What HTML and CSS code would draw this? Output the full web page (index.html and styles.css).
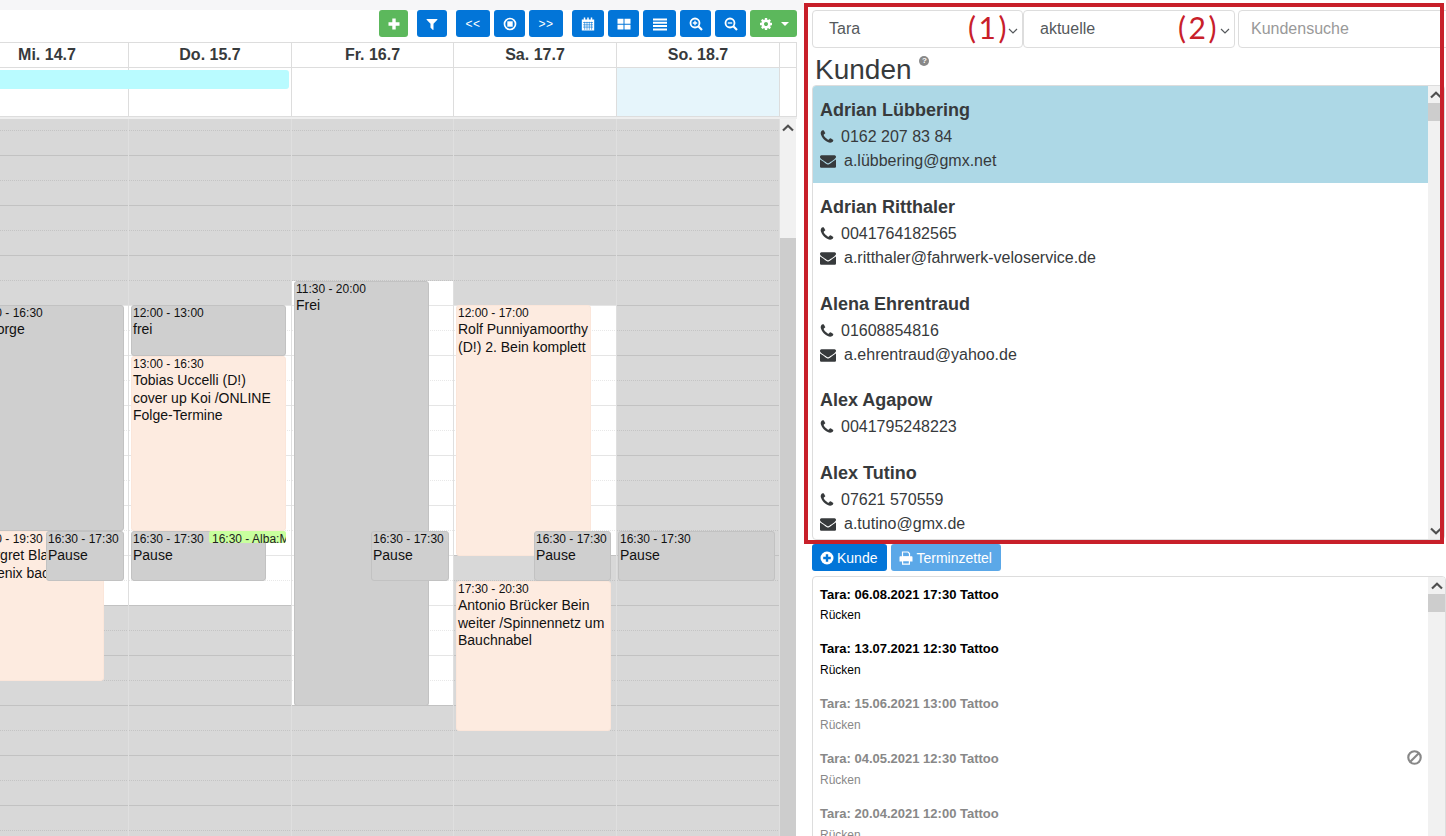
FILE: index.html
```html
<!DOCTYPE html>
<html lang="de">
<head>
<meta charset="utf-8">
<title>Kalender und Kunden</title>
<link rel="stylesheet" href="styles.css">
</head>
<body>
<svg class="defs" width="0" height="0" aria-hidden="true">
  <symbol id="i-phone" viewBox="0 0 1792 1792"><path d="M1600 1240q0 27-10 70.500t-21 68.500q-21 50-122 106-94 51-186 51-27 0-53-3.500t-57.500-12.500-47-14.500-55.500-20.500-49-18q-98-35-175-83-127-79-264-216t-216-264q-48-77-83-175-3-9-18-49t-20.500-55.500-14.500-47-12.500-57.500-3.500-53q0-92 51-186 56-101 106-122 25-11 68.500-21t70.500-10q14 0 21 3 18 6 53 76 11 19 30 54t35 63.500 31 53.500q3 4 17.500 25t21.500 35.500 7 28.500q0 20-28.500 50t-62 55-62 53-28.500 46q0 9 5 22.500t8.500 20.500 14 24 11.500 19q76 137 174 235t235 174q2 1 19 11.500t24 14 20.500 8.500 22.500 5q18 0 46-28.500t53-62 55-62 50-28.500q14 0 28.500 7t35.500 21.500 25 17.500q25 15 53.500 31t63.500 35 54 30q70 35 76 53 3 7 3 21z"/></symbol>
  <symbol id="i-mail" viewBox="0 0 1792 1792"><path d="M1792 710v794q0 66-47 113t-113 47h-1472q-66 0-113-47t-47-113v-794q44 49 101 87 362 246 497 345 57 42 92.500 65.500t94.500 48 110 24.500h2q51 0 110-24.500t94.500-48 92.500-65.500q170-123 498-345 57-39 100-87zm0-294q0 79-49 151t-122 123q-376 261-468 325-10 7-42.500 30.500t-54 38-52 32.500-57.500 27-50 9h-2q-23 0-50-9t-57.500-27-52-32.500-54-38-42.500-30.500q-91-64-262-182.500t-205-142.500q-62-42-117-115.500t-55-136.500q0-78 41.500-130t118.500-52h1472q65 0 112.500 47t47.500 113z"/></symbol>
  <symbol id="i-up" viewBox="0 0 12 8"><path d="M1 6.500 6 1.800l5 4.700" fill="none" stroke="#505050" stroke-width="2.200"/></symbol>
  <symbol id="i-down" viewBox="0 0 12 8"><path d="M1 1.500 6 6.200l5-4.700" fill="none" stroke="#505050" stroke-width="2.200"/></symbol>
  <symbol id="i-chev" viewBox="0 0 10 6"><path d="M1 1 5 5l4-4" fill="none" stroke="#55595c" stroke-width="1.200"/></symbol>
</svg>

<main class="cal">
  <div class="topstrip"></div>
  <div class="toolbar">
    <div class="tgroup">
      <button class="btn green w29"><svg class="ic" viewBox="0 0 14 14"><path d="M5.300 1.500h3.400v3.800h3.800v3.400H8.700v3.800H5.300V8.700H1.500V5.300h3.800z" fill="#fff"/></svg></button>
    </div>
    <div class="tgroup">
      <button class="btn w30"><svg class="ic" viewBox="0 0 1792 1792"><path fill="#fff" d="M1595 295q17 41-14 70l-493 493v742q0 42-39 59-13 5-25 5-27 0-45-19l-256-256q-19-19-19-45v-486l-493-493q-31-29-14-70 17-39 59-39h1280q42 0 59 39z"/></svg></button>
    </div>
    <div class="tgroup">
      <button class="btn w34 txt">&lt;&lt;</button>
      <button class="btn w31"><svg class="ic" viewBox="0 0 14 14"><circle cx="7" cy="7" r="5.500" fill="none" stroke="#fff" stroke-width="1.700"/><rect x="4.300" y="4.300" width="5.400" height="5.400" fill="#fff"/></svg></button>
      <button class="btn w34 txt">&gt;&gt;</button>
    </div>
    <div class="tgroup">
      <button class="btn w32"><svg class="ic" viewBox="0 0 14 14"><path d="M.8 2.500h12.400v11H.8z" fill="#fff"/><path d="M2 5.500h10M2 7.800h10M2 10.100h10M3.700 4.800v8M6 4.800v8M8.300 4.800v8M10.600 4.800v8" stroke="#0275d8" stroke-width=".6"/><path d="M3.500.6v3M7 .6v3M10.500.6v3" stroke="#fff" stroke-width="1.500"/></svg></button>
      <button class="btn w31"><svg class="ic" viewBox="0 0 14 14"><path d="M.5 1.800h6v4.900h-6zM7.500 1.800h6v4.900h-6zM.5 7.700h6v4.900h-6zM7.500 7.700h6v4.900h-6z" fill="#fff"/></svg></button>
      <button class="btn w33"><svg class="ic" viewBox="0 0 14 14"><path d="M0 1.500h14v2H0zM0 4.800h14v2H0zM0 8.100h14v2H0zM0 11.400h14v2H0z" fill="#fff"/></svg></button>
      <button class="btn w31"><svg class="ic" viewBox="0 0 14 14"><circle cx="6" cy="6" r="4.500" fill="none" stroke="#fff" stroke-width="1.800"/><path d="M9.300 9.300 13 13" stroke="#fff" stroke-width="2.200"/><path d="M6 3.800v4.400M3.800 6h4.400" stroke="#fff" stroke-width="1.300"/></svg></button>
      <button class="btn w31"><svg class="ic" viewBox="0 0 14 14"><circle cx="6" cy="6" r="4.500" fill="none" stroke="#fff" stroke-width="1.800"/><path d="M9.300 9.300 13 13" stroke="#fff" stroke-width="2.200"/><path d="M3.800 6h4.400" stroke="#fff" stroke-width="1.300"/></svg></button>
      <button class="btn green w47"><svg class="ic" viewBox="0 0 1792 1792"><path fill="#fff" d="M1152 896q0-106-75-181t-181-75-181 75-75 181 75 181 181 75 181-75 75-181zm512-109v222q0 12-8 23t-20 13l-185 28q-19 54-39 91 35 50 107 138 10 12 10 25t-9 23q-27 37-99 108t-94 71q-12 0-26-9l-138-108q-44 23-91 38-16 136-29 186-7 28-36 28h-222q-14 0-24.500-8.500t-11.500-21.500l-28-184q-49-16-90-37l-141 107q-10 9-25 9-14 0-25-11-126-114-165-168-7-10-7-23 0-12 8-23 15-21 51-66.500t54-70.500q-27-50-41-99l-183-27q-13-2-21-12.500t-8-23.500v-222q0-12 8-23t19-13l186-28q14-46 39-92-40-57-107-138-10-12-10-24 0-10 9-23 26-36 98.500-107.500t94.500-71.500q13 0 26 10l138 107q44-23 91-38 16-136 29-186 7-28 36-28h222q14 0 24.500 8.500t11.500 21.500l28 184q49 16 90 37l142-107q9-9 24-9 13 0 25 10 129 119 165 170 7 8 7 22 0 12-8 23-15 21-51 66.500t-54 70.500q26 50 41 98l183 28q13 2 21 12.500t8 23.500z"/></svg><span class="caret"></span></button>
    </div>
  </div>

  <div class="dayhead">
    <div class="hcell first">Mi. 14.7</div>
    <div class="hcell">Do. 15.7</div>
    <div class="hcell">Fr. 16.7</div>
    <div class="hcell">Sa. 17.7</div>
    <div class="hcell">So. 18.7</div>
    <div class="hcell"></div>
  </div>

  <div class="allday">
    <div class="acell"></div>
    <div class="acell"></div>
    <div class="acell"></div>
    <div class="acell"></div>
    <div class="acell sunday"></div>
    <div class="acell"></div>
    <div class="allbar"></div>
  </div>
  <div class="band"></div>

  <div class="calbody">
    <div class="day d-mi">
      <div class="ev gray" style="left:-30px;top:186px;width:154px;height:226px"><div class="t">12:00 - 16:30</div><div class="n in-6">George</div></div>
      <div class="ev peach" style="left:-30px;top:412px;width:134px;height:150px"><div class="t">16:30 - 19:30</div><div class="n in-4">Margret Blaser<br>Phoenix back</div></div>
      <div class="ev gray" style="left:46px;top:412px;width:78px;height:50px"><div class="t">16:30 - 17:30</div><div class="n">Pause</div></div>
    </div>
    <div class="day d-do">
      <div class="ev gray" style="left:2px;top:186px;width:155px;height:51px"><div class="t">12:00 - 13:00</div><div class="n">frei</div></div>
      <div class="ev peach" style="left:2px;top:237px;width:155px;height:175px"><div class="t">13:00 - 16:30</div><div class="n">Tobias Uccelli (D!)<br>cover up Koi /ONLINE<br>Folge-Termine</div></div>
      <div class="ev gray" style="left:2px;top:412px;width:135px;height:50px"><div class="t">16:30 - 17:30</div><div class="n">Pause</div></div>
      <div class="ev lime" style="left:80px;top:412px;width:77px;height:12px"><div class="t">16:30 - Alba:M</div></div>
    </div>
    <div class="day d-fr">
      <div class="ev gray" style="left:2px;top:162px;width:135px;height:425px"><div class="t">11:30 - 20:00</div><div class="n">Frei</div></div>
      <div class="ev gray" style="left:79px;top:412px;width:78px;height:50px"><div class="t">16:30 - 17:30</div><div class="n">Pause</div></div>
    </div>
    <div class="day d-sa">
      <div class="ev peach" style="left:2px;top:186px;width:135px;height:251px"><div class="t">12:00 - 17:00</div><div class="n">Rolf Punniyamoorthy (D!) 2. Bein komplett</div></div>
      <div class="ev gray" style="left:80px;top:412px;width:77px;height:50px"><div class="t">16:30 - 17:30</div><div class="n">Pause</div></div>
      <div class="ev peach" style="left:2px;top:462px;width:155px;height:150px"><div class="t">17:30 - 20:30</div><div class="n">Antonio Brücker Bein weiter /Spinnennetz um Bauchnabel</div></div>
    </div>
    <div class="day d-so">
      <div class="ev gray" style="left:1px;top:412px;width:157px;height:50px"><div class="t">16:30 - 17:30</div><div class="n">Pause</div></div>
    </div>
    <div class="sb cal-sb">
      <svg class="sb-up" width="12" height="8"><use href="#i-up"/></svg>
      <div class="sb-thumb"></div>
    </div>
  </div>
</main>

<aside class="side">
  <div class="filters">
    <div class="select first">Tara<svg class="chev" width="10" height="6"><use href="#i-chev"/></svg></div>
    <div class="select second">aktuelle<svg class="chev" width="10" height="6"><use href="#i-chev"/></svg></div>
    <div class="search">Kundensuche</div>
  </div>
  <h1 class="title">Kunden <span class="help">?</span></h1>

  <div class="panel customers">
    <div class="plist">
      <div class="cust active">
        <div class="cname">Adrian Lübbering</div>
        <div class="cline"><svg class="c-ph"><use href="#i-phone"/></svg>0162 207 83 84</div>
        <div class="cline"><svg class="c-ml"><use href="#i-mail"/></svg>a.lübbering@gmx.net</div>
      </div>
      <div class="cust">
        <div class="cname">Adrian Ritthaler</div>
        <div class="cline"><svg class="c-ph"><use href="#i-phone"/></svg>0041764182565</div>
        <div class="cline"><svg class="c-ml"><use href="#i-mail"/></svg>a.ritthaler@fahrwerk-veloservice.de</div>
      </div>
      <div class="cust">
        <div class="cname">Alena Ehrentraud</div>
        <div class="cline"><svg class="c-ph"><use href="#i-phone"/></svg>01608854816</div>
        <div class="cline"><svg class="c-ml"><use href="#i-mail"/></svg>a.ehrentraud@yahoo.de</div>
      </div>
      <div class="cust">
        <div class="cname">Alex Agapow</div>
        <div class="cline"><svg class="c-ph"><use href="#i-phone"/></svg>0041795248223</div>
      </div>
      <div class="cust">
        <div class="cname">Alex Tutino</div>
        <div class="cline"><svg class="c-ph"><use href="#i-phone"/></svg>07621 570559</div>
        <div class="cline"><svg class="c-ml"><use href="#i-mail"/></svg>a.tutino@gmx.de</div>
      </div>
    </div>
    <div class="sb list-sb">
      <svg class="sb-up" width="12" height="8"><use href="#i-up"/></svg>
      <div class="sb-thumb"></div>
      <svg class="sb-down" width="12" height="8"><use href="#i-down"/></svg>
    </div>
  </div>

  <div class="actions">
    <button class="abtn"><svg class="a-ic" viewBox="0 0 14 14"><circle cx="7" cy="7" r="6.500" fill="#fff"/><path d="M5.800 3.200h2.400v2.600h2.600v2.400H8.200v2.600H5.800V8.200H3.200V5.800h2.600z" fill="#0275d8"/></svg>Kunde</button>
    <button class="abtn muted"><svg class="a-ic" viewBox="0 0 14 14"><path d="M3.500 1h5.500l1.500 1.500V6h-7z" fill="none" stroke="#fff" stroke-width="1.200"/><path d="M.5 6.200c0-.6.400-1 1-1h11c.6 0 1 .4 1 1v4.300h-2.500V9H3v1.500H.5z" fill="#fff"/><path d="M3.600 9.600h6.800v3.600H3.600z" fill="none" stroke="#fff" stroke-width="1.200"/></svg>Terminzettel</button>
  </div>

  <div class="panel appts">
    <div class="plist">
      <div class="appt"><div class="atitle">Tara: 06.08.2021 17:30 Tattoo</div><div class="asub">Rücken</div></div>
      <div class="appt"><div class="atitle">Tara: 13.07.2021 12:30 Tattoo</div><div class="asub">Rücken</div></div>
      <div class="appt past"><div class="atitle">Tara: 15.06.2021 13:00 Tattoo</div><div class="asub">Rücken</div></div>
      <div class="appt past"><div class="atitle">Tara: 04.05.2021 12:30 Tattoo</div><div class="asub">Rücken</div>
        <svg class="ban" viewBox="0 0 14 14"><circle cx="7" cy="7" r="5.800" fill="none" stroke="#888" stroke-width="2"/><path d="M3 11 11 3" stroke="#888" stroke-width="2"/></svg>
      </div>
      <div class="appt past"><div class="atitle">Tara: 20.04.2021 12:00 Tattoo</div><div class="asub">Rücken</div></div>
    </div>
    <div class="sb list-sb appt-sb">
      <svg class="sb-up" width="12" height="8"><use href="#i-up"/></svg>
      <div class="sb-thumb"></div>
    </div>
  </div>
</aside>

<div class="redbox" aria-hidden="true"></div>
<div class="mark m1">(1)</div>
<div class="mark m2">(2)</div>
</body>
</html>
```
FILE: styles.css
```css
* { box-sizing: border-box; }
html, body { margin: 0; height: 836px; overflow: hidden; background: #fff; }
body {
  position: relative;
  display: flex;
  width: 1446px;
  font-family: "Liberation Sans", Arial, sans-serif;
  font-size: 14px;
  color: #373a3c;
}
.defs { position: absolute; }

/* calendar */
.cal { width: 797px; flex: none; height: 836px; }
.topstrip { height: 10px; width: 804px; background: #f6f6f8; }
.toolbar { display: flex; justify-content: flex-end; gap: 9px; height: 27px; margin-bottom: 5px; }
.tgroup { display: flex; gap: 4px; }
.btn {
  height: 27px; padding: 0; border: 0; border-radius: 3px;
  background: #0275d8; color: #fff;
  display: flex; align-items: center; justify-content: center; gap: 8px;
  font-family: inherit;
}
.btn.green { background: #5cb85c; }
.btn.txt { font-size: 12px; letter-spacing: .6px; font-weight: normal; }
.w29 { width: 29px; } .w30 { width: 30px; } .w31 { width: 31px; } .w32 { width: 32px; }
.w33 { width: 33px; } .w34 { width: 34px; } .w47 { width: 47px; }
.ic { width: 14px; height: 14px; display: block; }
.caret { width: 0; height: 0; border-left: 4px solid transparent; border-right: 4px solid transparent; border-top: 4px solid #fff; }

.dayhead, .allday, .calbody {
  display: grid;
  grid-template-columns: 129px 163px 162px 163px 163px 17px;
  width: 797px;
}
.dayhead { height: 26px; border-top: 1px solid #ddd; border-bottom: 1px solid #ddd; }
.hcell {
  text-align: center; font-size: 16px; font-weight: bold; line-height: 24px;
  border-right: 1px solid #ddd;
}
.hcell.first { margin-left: -34px; }
.allday { position: relative; height: 49px; border-bottom: 1px solid #ddd; }
.acell { border-right: 1px solid #ddd; }
.acell.sunday { background: #e6f5fb; }
.allbar { position: absolute; left: 0; top: 2px; width: 289px; height: 19px; background: #b9fbff; border-radius: 0 3px 3px 0; }
.band { height: 2px; background: #eee; }

.calbody { height: 717px; }
.day {
  --open-a: 0px; --open-b: 0px;
  position: relative;
  border-right: 1px solid #dfdfdf;
  background-color: #d8d8d8;
  background-image:
    repeating-linear-gradient(transparent 0 36px, rgba(0,0,0,.1) 36px 37px, transparent 37px 50px),
    linear-gradient(#fff, #fff);
  background-size: 100% 100%, 100% calc(var(--open-b) - var(--open-a));
  background-position: 0 0, 0 var(--open-a);
  background-repeat: no-repeat;
}
.d-mi, .d-do { --open-a: 186px; --open-b: 486px; }
.d-fr { --open-a: 162px; --open-b: 586px; }
.d-sa { --open-a: 186px; --open-b: 436px; }
/* dotted half-hour lines */
.day::before {
  content: ""; position: absolute; inset: 0; pointer-events: none;
  background-image: repeating-linear-gradient(90deg, rgba(0,0,0,.09) 0 1px, transparent 1px 2px);
  -webkit-mask-image: repeating-linear-gradient(transparent 0 11px, #000 11px 12px, transparent 12px 50px);
  mask-image: repeating-linear-gradient(transparent 0 11px, #000 11px 12px, transparent 12px 50px);
}
.ev {
  position: absolute; overflow: hidden;
  border: 1px solid; border-radius: 3px;
  padding: 0 1px; color: #111;
}
.ev .t { font-size: 12px; line-height: 15px; white-space: nowrap; }
.ev .n { font-size: 14px; line-height: 17.5px; }
.ev.gray { background: #cfcfcf; border-color: #c2c2c2; }
.ev.peach { background: #fdebe0; border-color: #fbe6da; }
.ev.lime { background: #c9ff9e; border: 0; padding: 1px 3px 0; border-radius: 2px; color: #222; }
.in-6 { text-indent: 6px; }
.in-4 { text-indent: 4px; white-space: nowrap; }

/* scrollbars */
.sb { position: relative; background: #f1f1f1; }
.sb-up { position: absolute; top: 5px; left: 50%; margin-left: -6px; }
.sb-down { position: absolute; bottom: 4px; left: 50%; margin-left: -6px; }
.sb-thumb { position: absolute; left: 0; right: 0; background: #cdcdcd; }
.cal-sb { width: 16px; }
.cal-sb .sb-thumb { top: 119px; bottom: 0; }
.list-sb { flex: none; width: 16px; }
.list-sb .sb-thumb { top: 17px; height: 18px; }

/* right side */
.side { flex: none; width: 649px; padding-left: 15px; }
.filters { display: flex; height: 38px; margin-top: 10px; width: 680px; }
.select, .search {
  height: 38px; border: 1px solid #ddd; border-radius: 4px;
  font-size: 16px; line-height: 36px; color: #55595c;
  position: relative;
}
.select.first { width: 211px; padding-left: 16px; }
.select.second { width: 212px; padding-left: 16px; }
.search { width: 245px; margin-left: 3px; padding-left: 12px; color: #999; }
.chev { position: absolute; right: 4px; top: 17px; }
.title { margin: 0; height: 37px; padding-left: 3px; font-size: 28px; line-height: 43px; font-weight: normal; color: #373a3c; white-space: nowrap; }
.help {
  display: inline-block; vertical-align: top; margin: 8px 0 0;
  width: 10px; height: 10px; border-radius: 50%;
  background: #888; color: #fff; font-size: 8px; font-weight: bold; line-height: 10px; text-align: center;
}
.panel { display: flex; border: 1px solid #ddd; border-radius: 4px; overflow: hidden; width: 634px; }
.plist { flex: 1; min-width: 0; overflow: hidden; }
.customers { height: 455px; width: 633px; }
.cust { padding: 10px 7px 9.8px; }
.cust.active { background: #add8e6; }
.cname { font-size: 18px; font-weight: bold; line-height: 29px; }
.cline { font-size: 16px; line-height: 24px; display: flex; align-items: center; white-space: nowrap; }
.c-ph { width: 16px; height: 16px; margin: 0 6px 0 -1px; fill: #373a3c; flex: none; }
.c-ml { width: 16px; height: 16px; margin-right: 8px; fill: #373a3c; flex: none; }
.actions { display: flex; gap: 4px; margin-top: 4px; height: 28px; }
.abtn {
  height: 27px; border: 0; border-radius: 3px; padding: 0 10px 0 8px;
  background: #0275d8; color: #fff; font: 14px "Liberation Sans", Arial, sans-serif;
  display: flex; align-items: center; gap: 3px;
}
.abtn.muted { background: #5ba8e8; padding-right: 9px; }
.a-ic { width: 14px; height: 14px; flex: none; }
.appts { margin-top: 4px; height: 300px; }
.appt { position: relative; padding: 8px 7px 0; height: 55px; font-size: 12px; color: #000; }
.appt:first-child { padding-top: 9px; }
.appt.past { color: #888; }
.atitle { font-size: 13px; font-weight: bold; line-height: 17px; }
.asub { line-height: 17px; margin-top: 5px; }
.appt:first-child .asub { margin-top: 4px; }
.ban { position: absolute; right: 6px; top: 8px; width: 15px; height: 15px; }
.appt-sb { width: 17px; }

/* red annotation */
.redbox { position: absolute; left: 804px; top: 3px; width: 640px; height: 541px; border: 4px solid #c8202a; pointer-events: none; }
.mark { position: absolute; top: 8px; font-family: Lato, sans-serif; font-size: 30px; line-height: 38px; letter-spacing: 2.5px; color: #c8202a; }
.m1 { left: 968px; }
.m2 { left: 1178px; }
```
